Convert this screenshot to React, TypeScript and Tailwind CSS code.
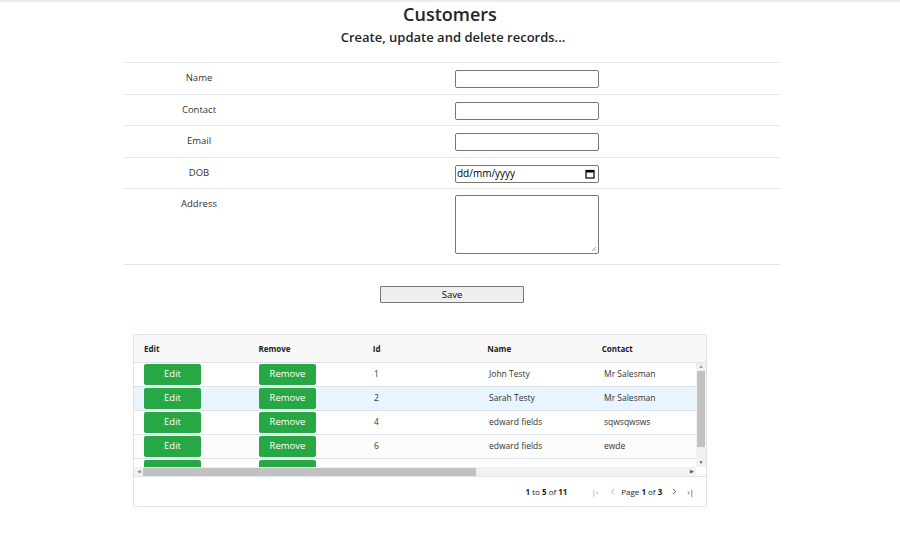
import { ChevronLeft, ChevronRight } from "lucide-react";

const rows = [
  { id: 1, name: "John Testy", contact: "Mr Salesman" },
  { id: 2, name: "Sarah Testy", contact: "Mr Salesman" },
  { id: 4, name: "edward fields", contact: "sqwsqwsws" },
  { id: 6, name: "edward fields", contact: "ewde" },
  { id: 7, name: "", contact: "" },
];

const fields = ["Name", "Contact", "Email"];

export default function App() {
  return (
    <div
      className="w-[900px] h-[545px] bg-white text-[#212529] border-t-2 border-[#ececec] overflow-hidden"
      style={{ fontFamily: '"Open Sans", "Noto Sans", sans-serif' }}
    >
      {/* Header */}
      <h1 className="text-center text-[18px] font-semibold leading-[22px] mt-[1px]">Customers</h1>
      <h2 className="text-center text-[13px] font-semibold leading-[18px] mt-[3px] pl-[6px]">
        Create, update and delete records...
      </h2>

      {/* Form */}
      <div className="ml-[124px] w-[656px] mt-[16px] border-t border-[#e5e5e5] text-[9.5px] text-[#333]">
        {fields.map((f) => (
          <div key={f} className="flex h-[31.5px] border-b border-[#e9e9e9]">
            <div className="w-[150px] text-center pt-[8px]">{f}</div>
            <div className="pl-[181px] pt-[7px]">
              <input className="w-[144px] h-[18px] border border-[#767676] rounded-[2px] bg-white" />
            </div>
          </div>
        ))}
        <div className="flex h-[31.5px] border-b border-[#e9e9e9]">
          <div className="w-[150px] text-center pt-[8px]">DOB</div>
          <div className="pl-[181px] pt-[7px]">
            <div className="w-[144px] h-[18px] border border-[#767676] rounded-[2px] flex items-center justify-between px-[1px] text-[10px] text-black">
              <span>dd/mm/yyyy</span>
              <svg width="10" height="10" viewBox="0 0 10 10" className="mr-[2px]">
                <rect x="1" y="1.5" width="8" height="7.5" fill="none" stroke="#000" strokeWidth="1.2" />
                <rect x="1" y="1.5" width="8" height="2" fill="#000" />
              </svg>
            </div>
          </div>
        </div>
        <div className="flex h-[76px] border-b border-[#e3e3e3]">
          <div className="w-[150px] text-center pt-[8px]">Address</div>
          <div className="pl-[181px] pt-[6px]">
            <div className="relative w-[144px] h-[59px] border border-[#767676] rounded-[2px]">
              <svg width="6" height="6" viewBox="0 0 6 6" className="absolute right-[1px] bottom-[1px]">
                <path d="M5 1 L1 5 M5 3.5 L3.5 5" stroke="#888" strokeWidth="0.8" />
              </svg>
            </div>
          </div>
        </div>
      </div>

      {/* Save */}
      <div className="flex pl-[380px] mt-[21px]">
        <button className="w-[144px] h-[17px] bg-[#efefef] border border-[#767676] rounded-[1px] text-[9.5px] leading-[14px] text-black">
          Save
        </button>
      </div>

      {/* Grid */}
      <div className="ml-[133px] mt-[31px] w-[574px] h-[173px] border border-[#dde2eb] rounded-[2px] flex flex-col text-[8.5px] text-[#333]">
        <div className="h-[28px] bg-[#f8f8f8] border-b border-[#dde2eb] flex items-center font-bold text-[8px] text-[#181d1f]">
          {["Edit", "Remove", "Id", "Name", "Contact"].map((h) => (
            <div key={h} className="w-[115px] pl-[10px]">{h}</div>
          ))}
        </div>
        <div className="flex h-[104px]">
          <div className="flex-1 overflow-hidden">
            {rows.map((r, i) => (
              <div
                key={r.id}
                className={`h-[24px] flex items-center border-b border-[#dde2eb] ${
                  i === 1 ? "bg-[#e8f4fe]" : i % 2 === 1 ? "bg-[#fcfcfc]" : "bg-white"
                }`}
              >
                <div className="w-[115px] pl-[10px]">
                  <div className="w-[57px] h-[21px] bg-[#28a745] rounded-[2px] text-white text-[9.5px] flex items-center justify-center">
                    {r.name && "Edit"}
                  </div>
                </div>
                <div className="w-[115px] pl-[10px]">
                  <div className="w-[57px] h-[21px] bg-[#28a745] rounded-[2px] text-white text-[9.5px] flex items-center justify-center">
                    {r.name && "Remove"}
                  </div>
                </div>
                <div className="w-[115px] pl-[10px]">{r.name && r.id}</div>
                <div className="w-[115px] pl-[10px]">{r.name}</div>
                <div className="w-[93px] pl-[10px]">{r.contact}</div>
              </div>
            ))}
          </div>
          {/* vertical scrollbar */}
          <div className="w-[10px] bg-[#f1f1f1] flex flex-col items-center">
            <div className="h-[8px] flex items-center text-[5px] text-[#999]">▲</div>
            <div className="w-[8px] h-[76px] bg-[#c1c1c1]" />
            <div className="flex-1" />
            <div className="h-[8px] flex items-center text-[5px] text-[#555]">▼</div>
          </div>
        </div>
        {/* horizontal scrollbar */}
        <div className="h-[10px] flex border-b border-[#dde2eb]">
          <div className="flex-1 bg-[#f1f1f1] flex items-center">
            <div className="w-[9px] text-[5px] text-[#999] text-center">◀</div>
            <div className="w-[333px] h-[8px] bg-[#c1c1c1]" />
            <div className="flex-1" />
            <div className="w-[9px] text-[5px] text-[#555] text-center">▶</div>
          </div>
          <div className="w-[10px] bg-white" />
        </div>
        {/* pagination */}
        <div className="flex-1 flex items-center justify-end pr-[12px] text-[8px] text-[#181d1f]">
          <span>
            <b>1</b> to <b>5</b> of <b>11</b>
          </span>
          <div className="flex items-center ml-[24px] text-[#999]">
            <span className="text-[8px] mr-[10px]">|‹</span>
            <ChevronLeft size={9} />
            <span className="text-[#181d1f] ml-[4px] mr-[8px]">
              Page <b>1</b> of <b>3</b>
            </span>
            <ChevronRight size={9} className="text-[#181d1f]" />
            <span className="ml-[8px] text-[#181d1f]">›|</span>
          </div>
        </div>
      </div>
    </div>
  );
}
